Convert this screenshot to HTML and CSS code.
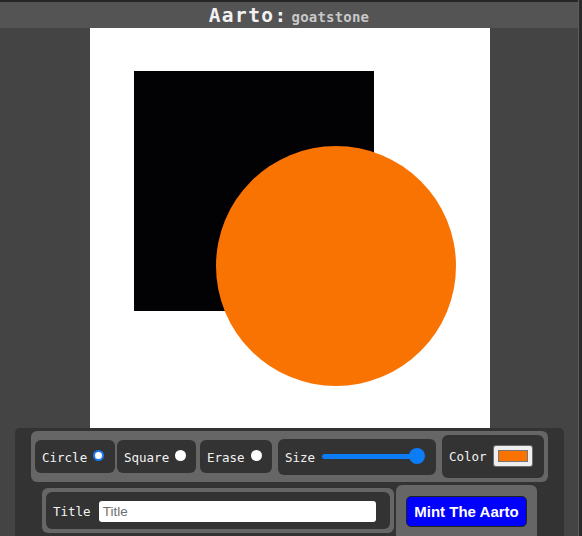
FILE: index.html
```html
<!DOCTYPE html>
<html>
<head>
<meta charset="utf-8">
<link rel="stylesheet" href="styles.css">
</head>
<body>
<div class="app">
  <div class="main">
    <header class="header">
      <span class="brand">Aarto:</span><span class="user">goatstone</span>
    </header>
    <div class="stage">
      <svg class="canvas" width="400" height="400" viewBox="0 0 400 400">
        <rect x="0" y="0" width="400" height="400" fill="#ffffff"/>
        <rect x="44" y="43" width="240" height="240" fill="#020204"/>
        <circle cx="246" cy="238" r="120" fill="#f97302"/>
      </svg>
    </div>
    <section class="panel">
      <div class="row tools">
        <label class="item tool-circle">Circle<span class="radio checked"></span></label>
        <label class="item tool-square">Square<span class="radio"></span></label>
        <label class="item tool-erase">Erase<span class="radio"></span></label>
        <div class="item size">Size<span class="slider"><span class="track"></span><span class="thumb"></span></span></div>
        <div class="item color">Color<span class="swatch"><span class="swatch-fill"></span></span></div>
      </div>
      <div class="row actions">
        <div class="title-group">
          <div class="item title-item">Title<input class="title-input" type="text" placeholder="Title"></div>
        </div>
        <div class="mint-group">
          <button class="mint">Mint The Aarto</button>
        </div>
      </div>
    </section>
  </div>
  <div class="edge"></div>
</div>
</body>
</html>
```

FILE: styles.css
```css
* { box-sizing: border-box; }

html, body {
  margin: 0;
  padding: 0;
  background: #444444;
  width: 582px;
  height: 536px;
  overflow: hidden;
}

.app {
  display: flex;
  height: 536px;
}

.main {
  width: 578px;
  display: flex;
  flex-direction: column;
}

.edge {
  width: 4px;
  background: #2a2a2a;
  border-left: 1px solid #5c5c5c;
}

.header {
  height: 28px;
  border-top: 2px solid #262626;
  background: #545454;
  display: flex;
  justify-content: center;
  align-items: baseline;
  padding-top: 2px;
  font-family: "DejaVu Sans Mono", monospace;
  font-weight: bold;
}

.brand {
  font-size: 19.5px;
  letter-spacing: 1.4px;
  color: #f2f2f2;
}

.user {
  font-size: 14px;
  letter-spacing: 0.2px;
  color: #c8c8c8;
  margin-left: 4px;
}

.stage {
  display: flex;
  justify-content: center;
}

.canvas {
  display: block;
  margin-left: 2px;
}

.panel {
  margin-left: 15px;
  width: 549px;
  flex: 1;
  background: #333333;
  border-radius: 5px 5px 0 0;
  display: flex;
  flex-direction: column;
  align-items: center;
  padding-top: 3px;
  gap: 3px;
  font-family: "DejaVu Sans Mono", monospace;
  font-size: 12.5px;
  color: #f2f2f2;
}

.row {
  display: flex;
  align-items: center;
}

.tools {
  background: #666666;
  border-radius: 6px;
  padding: 4px;
  height: 51px;
}

.item {
  background: #333333;
  border-radius: 6px;
  display: flex;
  align-items: center;
}

.tool-circle, .tool-square, .tool-erase {
  height: 33px;
  padding: 1px 10px 0 7px;
}

.tool-circle { width: 80px; }
.tool-square { width: 79px; margin-left: 2px; }
.tool-erase { width: 72px; margin-left: 4px; }

.radio {
  width: 11px;
  height: 11px;
  border-radius: 50%;
  background: #ffffff;
  margin-left: 6px;
  margin-top: -3px;
}

.radio.checked {
  border: 2.5px solid #1a7cf5;
}

.size {
  width: 158px;
  height: 36px;
  margin-left: 6px;
  padding: 2px 0 0 7px;
}

.slider {
  position: relative;
  width: 103px;
  height: 16px;
  margin-left: 7px;
  margin-top: -4px;
}

.track {
  position: absolute;
  left: 0;
  right: 8px;
  top: 6px;
  height: 5px;
  border-radius: 3px;
  background: #0d7cf7;
}

.thumb {
  position: absolute;
  right: 0;
  top: 0;
  width: 16px;
  height: 16px;
  border-radius: 50%;
  background: #0d7cf7;
}

.color {
  width: 102px;
  height: 43px;
  margin-left: 6px;
  padding: 0 0 0 7px;
}

.swatch {
  width: 40px;
  height: 22px;
  margin-left: 6px;
  margin-top: -2px;
  background: #efefef;
  border: 1px solid #6b6b6b;
  border-radius: 3px;
  padding: 4px 4px;
  display: flex;
}

.swatch-fill {
  flex: 1;
  background: #f97302;
  border: 1px solid #777777;
}

.actions {
  width: 495px;
  height: 51px;
}

.title-group {
  width: 352px;
  height: 45px;
  background: #666666;
  border-radius: 6px;
  padding: 4px;
}

.title-item {
  height: 37px;
  padding: 1px 14px 0 7px;
}

.title-input {
  margin-left: 8px;
  width: 278px;
  height: 21px;
  border: none;
  border-radius: 3px;
  background: #ffffff;
  padding: 0 4px;
  font-family: "Liberation Sans", Arial, sans-serif;
  font-size: 13.5px;
  color: #222;
  outline: none;
}

.title-input::placeholder {
  color: #707070;
}

.mint-group {
  width: 141px;
  height: 51px;
  margin-left: 2px;
  background: #666666;
  border-radius: 6px 6px 0 0;
  padding: 11px 10px 0 10px;
}

.mint {
  width: 121px;
  height: 31px;
  background: #0000ff;
  border: 1px solid #222;
  border-radius: 5px;
  color: #ffffff;
  font-family: "Liberation Sans", Arial, sans-serif;
  font-weight: bold;
  font-size: 15px;
  padding: 0;
}
```
